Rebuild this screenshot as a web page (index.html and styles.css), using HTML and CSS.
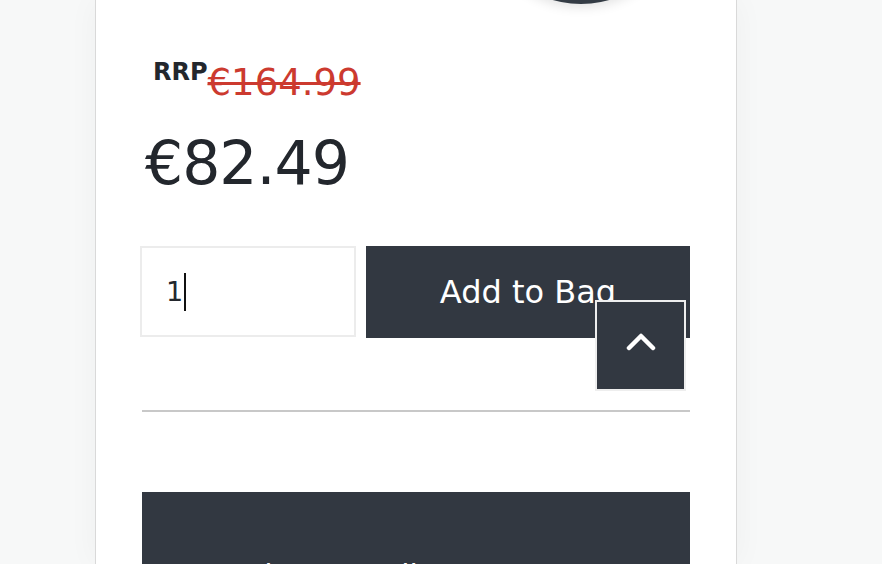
FILE: index.html
```html
<!DOCTYPE html>
<html lang="en">
<head>
<meta charset="utf-8">
<title>Product</title>
<link rel="stylesheet" href="styles.css">
</head>
<body>
<main class="card">
  <div class="swatch"></div>
  <div class="rrp-line"><span class="rrp">RRP</span><span class="was">€164.99</span></div>
  <div class="price">€82.49</div>
  <form class="buy">
    <div class="qty">1<span class="caret"></span></div>
    <button type="button" class="add">Add to Bag</button>
  </form>
  <hr class="rule">
  <section class="details">
    <h2 class="details-title">Product Details</h2>
  </section>
</main>
<button type="button" class="to-top" aria-label="Back to top">
  <svg width="30" height="18" viewBox="0 0 30 18"><polyline points="3,15 15,3 27,15" fill="none" stroke="#fff" stroke-width="4.5" stroke-linecap="round" stroke-linejoin="round"/></svg>
</button>
</body>
</html>
```
FILE: styles.css
```css
html, body {
  margin: 0;
  padding: 0;
  height: 100%;
  overflow: hidden;
}
body {
  background: #f7f8f8;
  font-family: "DejaVu Sans", "Liberation Sans", sans-serif;
  color: #23272d;
}
.card {
  box-sizing: border-box;
  width: 642px;
  margin-left: 95px;
  height: 100%;
  overflow: hidden;
  padding: 0 46px;
  background: #fff;
  border-left: 1px solid #d9d9d9;
  border-right: 1px solid #d9d9d9;
  box-shadow: 0 0 30px rgba(0, 0, 0, 0.04);
  display: flex;
  flex-direction: column;
}
.swatch {
  width: 204px;
  height: 204px;
  flex: none;
  border-radius: 50%;
  background: #343c45;
  margin-top: -200px;
  margin-left: 337px;
  box-shadow: 0 3px 12px rgba(0, 0, 0, 0.12);
}
.rrp-line {
  flex: none;
  margin-top: 46px;
  padding-left: 11px;
  line-height: 44px;
  height: 44px;
  white-space: nowrap;
}
.rrp {
  font-size: 24px;
  font-weight: 600;
  vertical-align: 15px;
  color: #23272d;
}
.was {
  font-size: 37px;
  font-weight: 500;
  color: #cc3a2f;
  text-decoration: line-through;
  text-decoration-thickness: 3px;
}
.price {
  flex: none;
  margin-top: 34px;
  padding-left: 3px;
  font-size: 60px;
  line-height: 70px;
  letter-spacing: -1px;
}
.buy {
  flex: none;
  display: flex;
  gap: 10px;
  margin: 48px 0 0 -2px;
}
.qty {
  box-sizing: border-box;
  width: 216px;
  height: 91px;
  border: 2px solid #ececec;
  padding-left: 24px;
  display: flex;
  align-items: center;
  font-size: 27px;
  color: #23272d;
}
.caret {
  display: inline-block;
  width: 2px;
  height: 38px;
  background: #111;
  margin-left: 1px;
}
.add {
  flex: 1;
  height: 92px;
  border: 0;
  border-radius: 0;
  background: #323841;
  color: #fff;
  font-family: inherit;
  font-size: 32px;
  padding: 0;
  margin: 0;
}
.rule {
  flex: none;
  margin: 72px 0 0;
  border: 0;
  height: 2px;
  background: #c8c8c8;
}
.details {
  flex: none;
  margin-top: 80px;
  height: 200px;
  background: #323841;
  padding: 64px 64px 0;
}
.details-title {
  margin: 0;
  color: #fff;
  font-weight: 400;
  font-size: 30px;
  line-height: 40px;
}
.to-top {
  position: fixed;
  left: 595px;
  top: 300px;
  width: 91px;
  height: 91px;
  box-sizing: border-box;
  border: 2px solid #eeeeee;
  background: #323841;
  padding: 0;
  display: flex;
  align-items: center;
  justify-content: center;
}
.to-top svg {
  margin-top: -8px;
}
```
